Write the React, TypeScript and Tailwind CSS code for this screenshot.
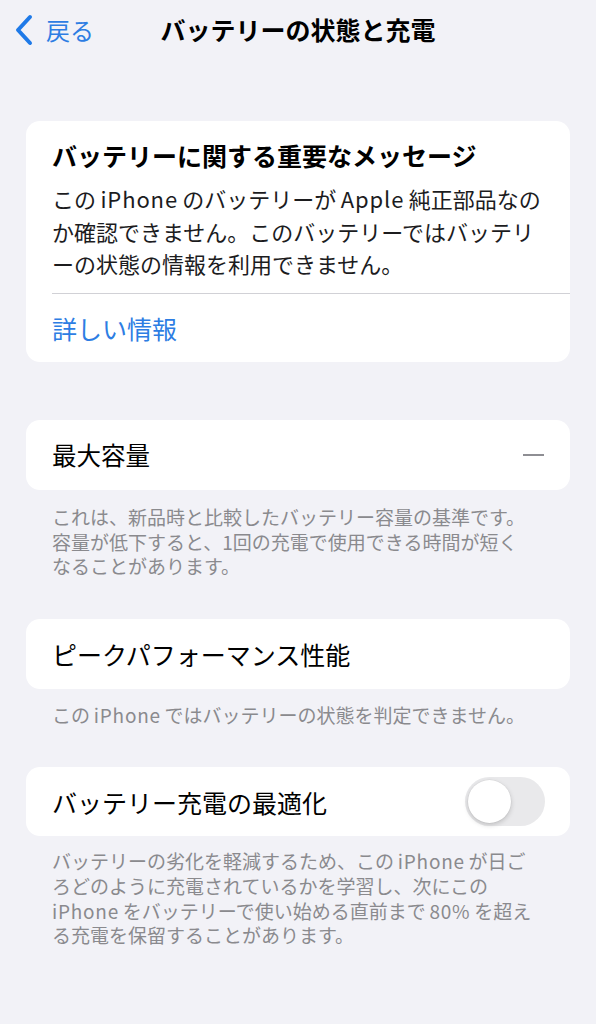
import React from "react";

const font = { fontFamily: '"Noto Sans CJK JP", "Noto Sans", sans-serif' };

function L({ children }: { children: React.ReactNode }) {
  return <span className="mx-[0.2em] tracking-[0.04em]">{children}</span>;
}

export default function App() {
  return (
    <div
      className="w-[596px] h-[1024px] bg-[#f2f2f7] text-black overflow-hidden"
      style={font}
    >
      {/* Header */}
      <div className="relative h-[60px] flex items-center justify-center">
        <div className="absolute left-[14px] top-[14px] flex items-center gap-[12px]">
          <svg width="20" height="32" viewBox="0 0 20 32">
            <path
              d="M16 3 L4 16 L16 29"
              fill="none"
              stroke="#1f7ae8"
              strokeWidth="4"
              strokeLinecap="round"
              strokeLinejoin="round"
            />
          </svg>
          <span className="text-[24px] leading-[32px] text-[#2d7de3]">戻る</span>
        </div>
        <div className="text-[25px] leading-[32px] font-bold tracking-[0px] mt-[-2px]">
          バッテリーの状態と充電
        </div>
      </div>

      <div className="px-[26px] pt-[61px]">
        {/* Card 1 */}
        <div className="bg-white rounded-[14px] h-[241px] flex flex-col">
          <div className="pl-[26px] pt-[17px]">
            <div className="text-[25px] leading-[34px] font-bold whitespace-nowrap">
              バッテリーに関する重要なメッセージ
            </div>
            <div className="text-[22px] leading-[32.5px] mt-[10px] whitespace-nowrap text-[#1c1c1e]">
              この<L>iPhone</L>のバッテリーが<L>Apple</L>純正部品なの
              <br />
              か確認できません。このバッテリーではバッテリ
              <br />
              ーの状態の情報を利用できません。
            </div>
          </div>
          <div className="ml-[26px] mt-[13px] h-px bg-[#d1d1d6]" />
          <div className="pl-[26px] flex-1 flex items-center">
            <span className="text-[25px] leading-[32px] text-[#2d7de3]">詳しい情報</span>
          </div>
        </div>

        {/* Card 2 */}
        <div className="mt-[58px] bg-white rounded-[14px] h-[70px] flex items-center justify-between pl-[26px] pr-[26px]">
          <span className="text-[24.5px] leading-[32px]">最大容量</span>
          <span className="w-[21px] h-[2px] bg-[#8e8e93]" />
        </div>
        <div className="pl-[26px] pt-[15px] text-[19px] leading-[24.5px] text-[#8a8a8e] whitespace-nowrap">
          これは、新品時と比較したバッテリー容量の基準です。
          <br />
          容量が低下すると、1回の充電で使用できる時間が短く
          <br />
          なることがあります。
        </div>

        {/* Card 3 */}
        <div className="mt-[40px] bg-white rounded-[14px] h-[70px] flex items-center pl-[26px]">
          <span className="text-[25px] leading-[32px]">ピークパフォーマンス性能</span>
        </div>
        <div className="pl-[26px] pt-[14px] text-[19px] leading-[24.5px] text-[#8a8a8e] whitespace-nowrap">
          この<L>iPhone</L>ではバッテリーの状態を判定できません。
        </div>

        {/* Card 4 */}
        <div className="mt-[40px] bg-white rounded-[14px] h-[69px] flex items-center justify-between pl-[26px] pr-[25px]">
          <span className="text-[25px] leading-[32px]">バッテリー充電の最適化</span>
          <div className="w-[80px] h-[49px] rounded-full bg-[#e9e9eb] p-[3px] flex items-center">
            <div className="w-[43px] h-[43px] rounded-full bg-white shadow-[0_2px_5px_rgba(0,0,0,0.18),0_0_0_0.5px_rgba(0,0,0,0.05)]" />
          </div>
        </div>
        <div className="pl-[26px] pt-[13px] text-[19px] leading-[24.8px] text-[#8a8a8e] whitespace-nowrap">
          バッテリーの劣化を軽減するため、この<L>iPhone</L>が日ご
          <br />
          ろどのように充電されているかを学習し、次にこの
          <br />
          <span className="mr-[0.2em] tracking-[0.04em]">iPhone</span>をバッテリーで使い始める直前まで<L>80%</L>を超え
          <br />
          る充電を保留することがあります。
        </div>
      </div>
    </div>
  );
}
